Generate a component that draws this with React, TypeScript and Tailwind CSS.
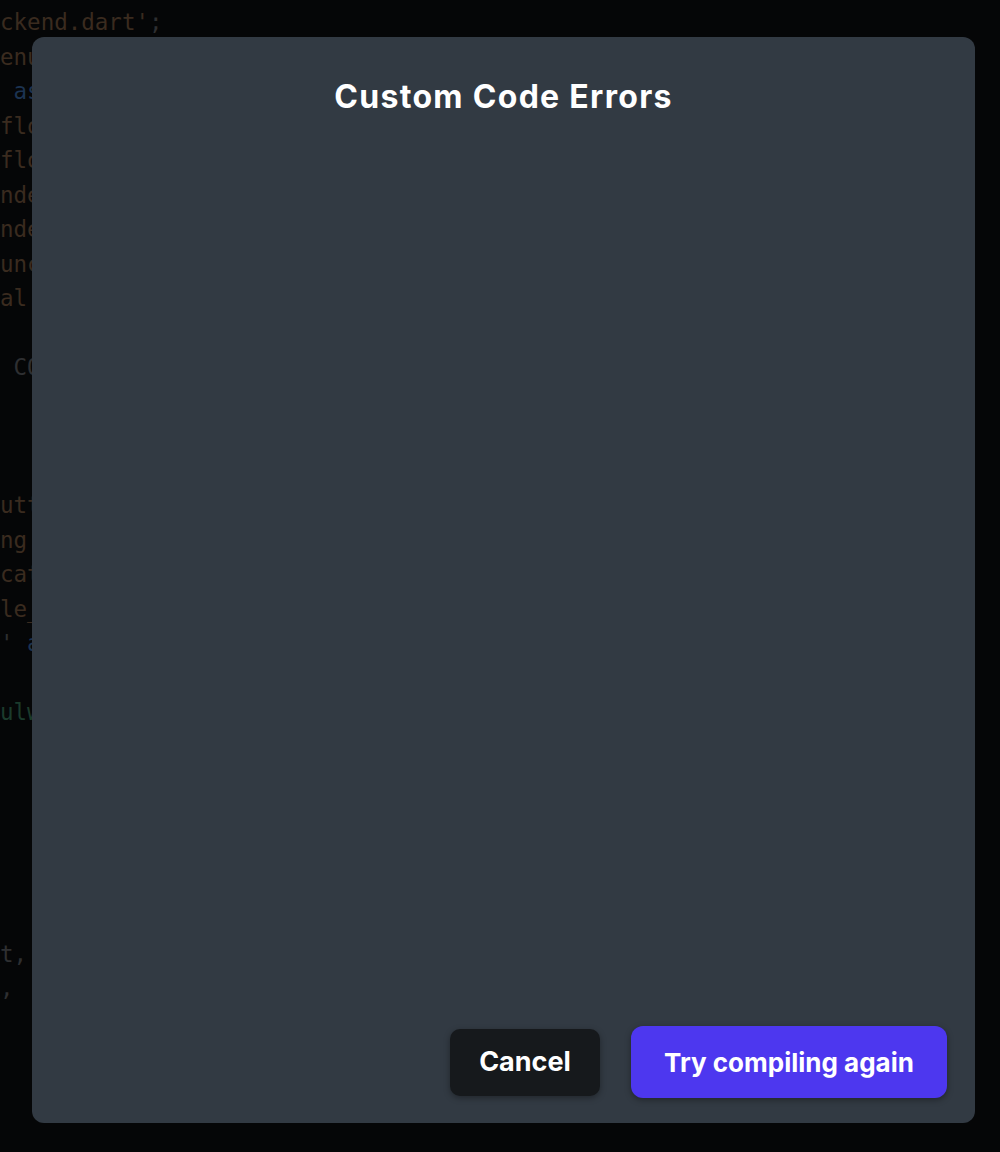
const brown = "text-[#3a2b1f]";
const blue = "text-[#1c3352]";
const green = "text-[#1b3b2c]";
const grey = "text-[#2e2f31]";

type Seg = [string, string];

const codeLines: Seg[][] = [
  [["ckend.dart'", brown], [";", grey]],
  [["enu", brown]],
  [[" as", blue]],
  [["flo", brown]],
  [["flo", brown]],
  [["nde", brown]],
  [["nde", brown]],
  [["unc", brown]],
  [["al.", brown]],
  [],
  [[" CO", grey]],
  [],
  [],
  [],
  [["utt", brown]],
  [["ng.", brown]],
  [["cat", brown]],
  [["le_", brown]],
  [["' ", grey], ["a", blue]],
  [],
  [["ulw", green]],
  [],
  [],
  [],
  [],
  [],
  [],
  [["t,", grey]],
  [[",", grey]],
];

function CodeBackdrop() {
  return (
    <div className="pt-[5px] pl-[0px] font-['DejaVu_Sans_Mono',monospace] text-[22.5px] leading-[34.5px] whitespace-pre">
      {codeLines.map((line, i) => (
        <div key={i} className="h-[34.5px]">
          {line.map(([t, c], j) => (
            <span key={j} className={c}>
              {t}
            </span>
          ))}
        </div>
      ))}
    </div>
  );
}

export default function App() {
  return (
    <div className="relative w-[1000px] h-[1152px] bg-[#050607] overflow-hidden">
      <CodeBackdrop />

      <div className="absolute left-[32px] top-[37px] w-[943px] h-[1086px] rounded-[12px] bg-[#323a43] flex flex-col font-['Inter',sans-serif]">
        <h1 className="pt-[40px] text-center text-white text-[32px] leading-[40px] font-bold tracking-[1.3px]">
          Custom Code Errors
        </h1>

        <div className="flex-1" />

        <div className="flex items-center justify-end gap-[31px] pr-[28px] pb-[25px]">
          <button className="w-[150px] h-[67px] rounded-[10px] bg-[#16191c] text-white text-[27px] font-bold shadow-[0_2px_6px_rgba(0,0,0,0.35)]">
            Cancel
          </button>
          <button className="w-[316px] h-[72px] rounded-[12px] bg-[#4d37ef] text-white text-[26px] font-bold shadow-[0_2px_6px_rgba(0,0,0,0.35)]">
            Try compiling again
          </button>
        </div>
      </div>
    </div>
  );
}
